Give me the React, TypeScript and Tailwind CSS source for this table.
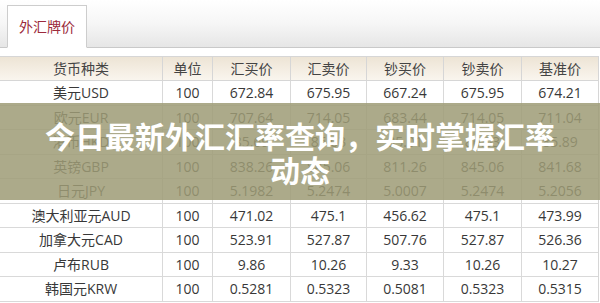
import React from 'react';

const rows: string[][] = [
  ['美元USD', '100', '672.84', '675.95', '667.24', '675.95', '674.21'],
  ['欧元EUR', '100', '707.64', '714.05', '683.44', '714.05', '711.04'],
  ['港币HKD', '100', '85.69', '86.03', '85.01', '86.03', '85.89'],
  ['英镑GBP', '100', '838.26', '845.06', '811.26', '845.06', '841.68'],
  ['日元JPY', '100', '5.1982', '5.2474', '5.0007', '5.2474', '5.2056'],
  ['澳大利亚元AUD', '100', '471.02', '475.1', '456.62', '475.1', '473.99'],
  ['加拿大元CAD', '100', '523.91', '527.87', '507.76', '527.87', '526.36'],
  ['卢布RUB', '100', '9.86', '10.26', '9.33', '10.26', '10.27'],
  ['韩国元KRW', '100', '0.5281', '0.5323', '0.5081', '0.5323', '0.5315'],
];

const headers = ['货币种类', '单位', '汇买价', '汇卖价', '钞买价', '钞卖价', '基准价'];

const cols = 'grid grid-cols-[162px_50px_78px_76px_77px_78px_77px]';

export default function App() {
  return (
    <div
      className="relative w-[600px] h-[303px] overflow-hidden bg-white"
      style={{ fontFamily: '"Open Sans", "Noto Sans CJK SC", sans-serif' }}
    >
      {/* Tab bar */}
      <div className="h-[48px] flex items-end pl-[7px] bg-gradient-to-b from-white via-[#f6f6f6] to-[#e6e6e6] border-b border-[#c9c9c9]">
        <div className="w-[80px] h-[43px] -mb-px bg-white border border-[#cdcdcd] border-b-white flex items-center justify-center text-[14px] text-[#9c2a3c]">
          外汇牌价
        </div>
      </div>

      {/* Table */}
      <div className="mt-[8px] w-[599px] border-t border-r border-[#d6d6d6] text-[14px] text-[#383838]">
        <div className={`${cols} h-[24px] bg-gradient-to-b from-[#ede4d5] to-[#faf6ef] text-[#444]`}>
          {headers.map((h, i) => (
            <div key={i} className={`flex items-center justify-center border-b border-[#d6d6d6] ${i > 0 ? 'border-l' : ''}`}>
              {h}
            </div>
          ))}
        </div>
        {rows.map((r, ri) => (
          <div key={ri} className={`${cols} h-[24.5px]`}>
            {r.map((c, ci) => (
              <div key={ci} className={`flex items-center justify-center border-b border-[#d9d9d9] ${ci > 0 ? 'border-l' : ''}`}>
                {c}
              </div>
            ))}
          </div>
        ))}
      </div>

      {/* Banner overlay */}
      <div className="absolute left-0 right-0 top-[103px] h-[97px] bg-[#9d9b75]/85 flex items-center justify-center">
        <h1
          className="w-[530px] text-center text-white font-bold text-[30px] leading-[34px]"
          style={{ fontFamily: '"Noto Sans CJK SC", sans-serif' }}
        >
          今日最新外汇汇率查询，实时掌握汇率动态
        </h1>
      </div>
    </div>
  );
}
